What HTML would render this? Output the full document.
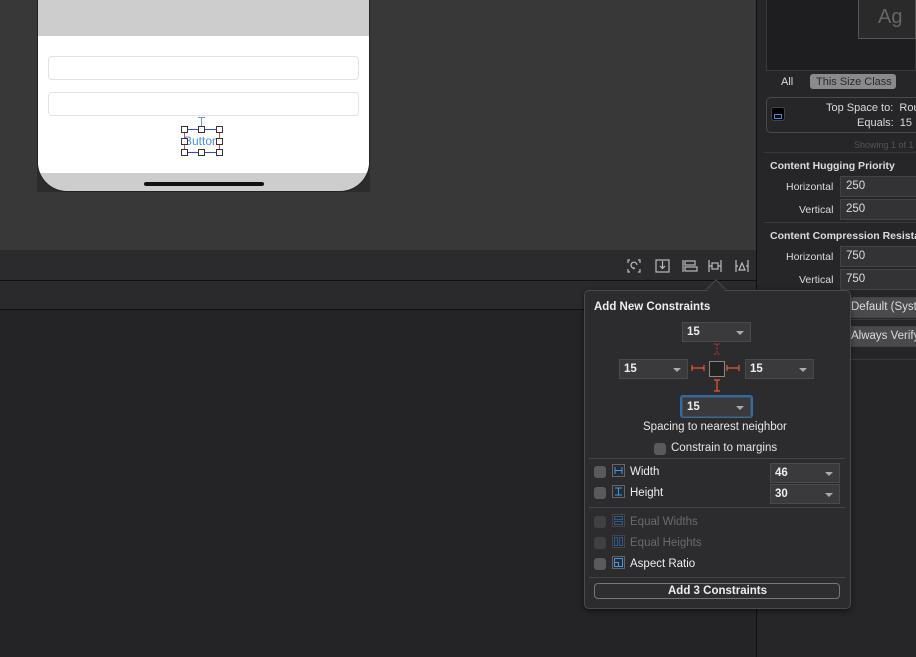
<!DOCTYPE html>
<html><head><meta charset="utf-8"><style>
*{box-sizing:border-box;margin:0;padding:0}
body{width:916px;height:657px;overflow:hidden;background:#242427;font-family:"Liberation Sans",sans-serif;position:relative;color:#dcdcdc}
.a{position:absolute}
.t{position:absolute;font-size:11px;white-space:nowrap}
.p{font-size:11.5px}
.fld{position:absolute;background:#3a3a3c;border:1px solid #4a4a4c;font-size:11.5px;font-weight:bold;color:#eee;padding:3px 0 0 4px;height:20px}
.fld .ar{position:absolute;right:6px;top:8px;width:0;height:0;border-left:4px solid transparent;border-right:4px solid transparent;border-top:4px solid #aaa}
.ib{position:absolute;background:#333335;border:1px solid #444;font-size:11.5px;color:#ddd;padding:3px 0 0 5px;height:21px;width:90px}
.cb{position:absolute;width:12px;height:12px;border-radius:3px;background:#5a5a5c}
.ico{position:absolute;width:13px;height:13px;border:1px solid #666;background:#2a2a2c}
</style></head><body>
<div class="a" style="left:0;top:0;width:756px;height:250px;background:#383838"></div>
<div class="a" style="left:37px;top:0;width:333px;height:192px;background:#2c2c2c"></div>
<div class="a" style="left:37px;top:0;width:333px;height:192px;background:#cdcdcd;border-radius:0 0 30px 30px;border:1px solid #222;border-top:none;overflow:hidden">
  <div class="a" style="left:0;top:36px;width:333px;height:137px;background:#fff"></div>
  <div class="a" style="left:10px;top:56px;width:311px;height:24px;border:1px solid #e2e2e2;border-radius:4px"></div>
  <div class="a" style="left:10px;top:92px;width:311px;height:24px;border:1px solid #e2e2e2;border-radius:4px"></div>
  <div class="a" style="left:106px;top:182px;width:120px;height:4px;background:#111;border-radius:2px"></div>
</div>
<div class="a" style="left:201px;top:117px;width:1px;height:9px;background:#6a9ad0"></div>
<div class="a" style="left:198px;top:117px;width:7px;height:1px;background:#6a9ad0"></div>
<div class="a" style="left:184px;top:129px;width:36px;height:24px;border-top:1px solid #3344ee;border-bottom:1px solid #3344ee;border-left:1px solid #e44;border-right:1px solid #e44"></div>
<div class="t" style="left:184px;top:134px;color:#4a8ef0;font-size:12px">Button</div>
<div class="a" style="left:181px;top:126px;width:7px;height:7px;border:1px solid #333;background:#fff"></div>
<div class="a" style="left:198px;top:126px;width:7px;height:7px;border:1px solid #333;background:#fff"></div>
<div class="a" style="left:216px;top:126px;width:7px;height:7px;border:1px solid #333;background:#fff"></div>
<div class="a" style="left:181px;top:138px;width:7px;height:7px;border:1px solid #333;background:#fff"></div>
<div class="a" style="left:216px;top:138px;width:7px;height:7px;border:1px solid #333;background:#fff"></div>
<div class="a" style="left:181px;top:149px;width:7px;height:7px;border:1px solid #333;background:#fff"></div>
<div class="a" style="left:198px;top:149px;width:7px;height:7px;border:1px solid #333;background:#fff"></div>
<div class="a" style="left:216px;top:149px;width:7px;height:7px;border:1px solid #333;background:#fff"></div>
<div class="a" style="left:0;top:250px;width:756px;height:30px;background:#2b2b2d"></div>
<div class="a" style="left:0;top:280px;width:756px;height:1px;background:#111"></div>
<div class="a" style="left:0;top:281px;width:756px;height:28px;background:#2a2a2c"></div>
<div class="a" style="left:0;top:309px;width:756px;height:1px;background:#111"></div>
<svg class="a" style="left:625px;top:256px" width="130" height="20" viewBox="0 0 130 20" fill="none" stroke="#bbb" stroke-width="1.2">
 <path d="M5 4h-2v3M13 4h2v3M5 16h-2v-3M13 16h2v-3"/><path d="M12 9a3 3 0 1 0-2 3l-2 1"/>
 <rect x="31" y="4" width="13" height="12"/><path d="M37.5 5v7M35 10l2.5 2.5 2.5-2.5"/>
 <path d="M58 4v12"/><rect x="60" y="5" width="10" height="4"/><rect x="60" y="11" width="12" height="4"/>
 <path d="M84 4v12M96 4v12M84 10h3M93 10h3"/><rect x="87" y="7" width="6" height="6"/>
 <path d="M111 4v12M123 4v12M111 10h2M121 10h2M114 14l3-7 3 7z"/>
</svg>
<div class="a" style="left:756px;top:0;width:160px;height:657px;background:#262628;border-left:1px solid #0e0e0e"></div>
<div class="a" style="left:766px;top:0;width:150px;height:71px;background:#1e1e20;border:1px solid #3a3a3a;border-top:none"></div>
<div class="a" style="left:858px;top:0;width:58px;height:39px;border:1px solid #555;border-top:none;background:#2a2a2a"></div>
<div class="t" style="left:878px;top:6px;font-size:20px;color:#666">Ag</div>
<div class="t" style="left:781px;top:76px;color:#ddd">All</div>
<div class="a" style="left:810px;top:74px;width:86px;height:15px;background:#8a8a8c;border-radius:3px"></div>
<div class="t" style="left:816px;top:76px;color:#2a2a2a">This Size Class</div>
<div class="a" style="left:766px;top:97px;width:160px;height:36px;border:1px solid #4a4a4a;border-radius:5px"></div>
<div class="a" style="left:771px;top:107px;width:14px;height:14px;background:#000;border:1px solid #444;border-radius:3px"></div>
<div class="a" style="left:774px;top:114px;width:8px;height:5px;border:1px solid #3a8ef0"></div>
<div class="t" style="left:826px;top:102px">Top Space to: &nbsp;Rou</div>
<div class="t" style="left:857px;top:117px">Equals: &nbsp;15</div>
<div class="t" style="left:854px;top:140px;font-size:9px;color:#555">Showing 1 of 1</div>
<div class="a" style="left:764px;top:152px;width:152px;height:1px;background:#3a3a3a"></div>
<div class="t" style="left:770px;top:160px;font-weight:bold;font-size:10.5px">Content Hugging Priority</div>
<div class="t" style="left:786px;top:181px;font-size:10.5px">Horizontal</div>
<div class="ib" style="left:840px;top:176px">250</div>
<div class="t" style="left:799px;top:204px;font-size:10.5px">Vertical</div>
<div class="ib" style="left:840px;top:199px">250</div>
<div class="a" style="left:764px;top:222px;width:152px;height:1px;background:#3a3a3a"></div>
<div class="t" style="left:770px;top:230px;font-weight:bold;font-size:10.5px">Content Compression Resista</div>
<div class="t" style="left:786px;top:251px;font-size:10.5px">Horizontal</div>
<div class="ib" style="left:840px;top:246px">750</div>
<div class="t" style="left:799px;top:274px;font-size:10.5px">Vertical</div>
<div class="ib" style="left:840px;top:269px">750</div>
<div class="ib" style="left:845px;top:297px;background:#4a4a4c">Default (Syst</div>
<div class="a" style="left:846px;top:319px;width:70px;height:1px;background:#3a3a3a"></div>
<div class="ib" style="left:845px;top:326px;background:#4a4a4c">Always Verify</div>
<div class="a" style="left:846px;top:359px;width:70px;height:1px;background:#3a3a3a"></div>
<div class="a" style="left:584px;top:290px;width:267px;height:319px;background:#2c2c2e;border:1px solid #4a4a4c;border-radius:5px;box-shadow:0 2px 6px rgba(0,0,0,.5)"></div>
<div class="a" style="left:709px;top:282px;width:14px;height:14px;background:#2c2c2e;border-left:1px solid #4a4a4c;border-top:1px solid #4a4a4c;transform:rotate(45deg)"></div>
<div class="t p" style="left:594px;top:301px;font-weight:bold;color:#eee">Add New Constraints</div>
<div class="fld" style="left:682px;top:322px;width:69px">15<span class="ar"></span></div>
<div class="fld" style="left:619px;top:359px;width:69px">15<span class="ar"></span></div>
<div class="fld" style="left:745px;top:359px;width:69px">15<span class="ar"></span></div>
<div class="a" style="left:680px;top:395px;width:73px;height:23px;border:2px solid #2a6fad;border-radius:3px"></div>
<div class="fld" style="left:682px;top:397px;width:69px">15<span class="ar"></span></div>
<div class="a" style="left:709px;top:361px;width:16px;height:16px;background:#222;border:1px solid #888"></div>
<svg class="a" style="left:690px;top:343px" width="55" height="55" fill="none" stroke="#e53" stroke-width="1.2">
 <path d="M27 1v10M24 1h6M24 11h6" stroke="#a33" stroke-dasharray="2 1.5"/>
 <path d="M2 22v6M2 25h12M14 22v6M37 22v6M37 25h12M49 22v6"/>
 <path d="M27 37v11M24 37h6M24 48h6"/>
</svg>
<div class="t p" style="left:643px;top:421px;color:#e6e6e6">Spacing to nearest neighbor</div>
<div class="cb" style="left:654px;top:443px"></div>
<div class="t p" style="left:671px;top:442px;color:#e6e6e6">Constrain to margins</div>
<div class="a" style="left:589px;top:458px;width:256px;height:1px;background:#444"></div>
<div class="cb" style="left:594px;top:466px"></div>
<div class="ico" style="left:612px;top:464px"></div>
<svg class="a" style="left:612px;top:464px" width="13" height="13" fill="none" stroke="#3a9af0"><path d="M3 3v7M10 3v7M3 6.5h7"/></svg>
<div class="t p" style="left:630px;top:466px;color:#eee">Width</div>
<div class="fld" style="left:770px;top:463px;width:70px">46<span class="ar"></span></div>
<div class="cb" style="left:594px;top:487px"></div>
<div class="ico" style="left:612px;top:485px"></div>
<svg class="a" style="left:612px;top:485px" width="13" height="13" fill="none" stroke="#3a9af0"><path d="M3 3h7M3 10h7M6.5 3v7"/></svg>
<div class="t p" style="left:630px;top:487px;color:#eee">Height</div>
<div class="fld" style="left:770px;top:484px;width:70px">30<span class="ar"></span></div>
<div class="a" style="left:589px;top:507px;width:256px;height:1px;background:#444"></div>
<div class="cb" style="left:594px;top:516px;background:#404042"></div>
<div class="ico" style="left:612px;top:514px;border-color:#444"></div>
<svg class="a" style="left:612px;top:514px" width="13" height="13" fill="none" stroke="#2a5a90"><rect x="2.5" y="2.5" width="8" height="3"/><rect x="2.5" y="7.5" width="8" height="3"/></svg>
<div class="t p" style="left:630px;top:516px;color:#6a6a6a">Equal Widths</div>
<div class="cb" style="left:594px;top:537px;background:#404042"></div>
<div class="ico" style="left:612px;top:535px;border-color:#444"></div>
<svg class="a" style="left:612px;top:535px" width="13" height="13" fill="none" stroke="#2a5a90"><rect x="2.5" y="2.5" width="3" height="8"/><rect x="7.5" y="2.5" width="3" height="8"/></svg>
<div class="t p" style="left:630px;top:537px;color:#6a6a6a">Equal Heights</div>
<div class="cb" style="left:594px;top:558px"></div>
<div class="ico" style="left:612px;top:556px"></div>
<svg class="a" style="left:612px;top:556px" width="13" height="13" fill="none" stroke="#3a9af0"><path d="M2.5 2.5h8v8h-8zM2.5 6.5h4v4"/></svg>
<div class="t p" style="left:630px;top:558px;color:#eee">Aspect Ratio</div>
<div class="a" style="left:589px;top:577px;width:256px;height:1px;background:#444"></div>
<div class="a" style="left:594px;top:583px;width:246px;height:16px;border:1px solid #777;border-radius:4px;background:#2e2e30"></div>
<div class="t p" style="left:668px;top:585px;font-weight:bold;color:#eee">Add 3 Constraints</div>
</body></html>
